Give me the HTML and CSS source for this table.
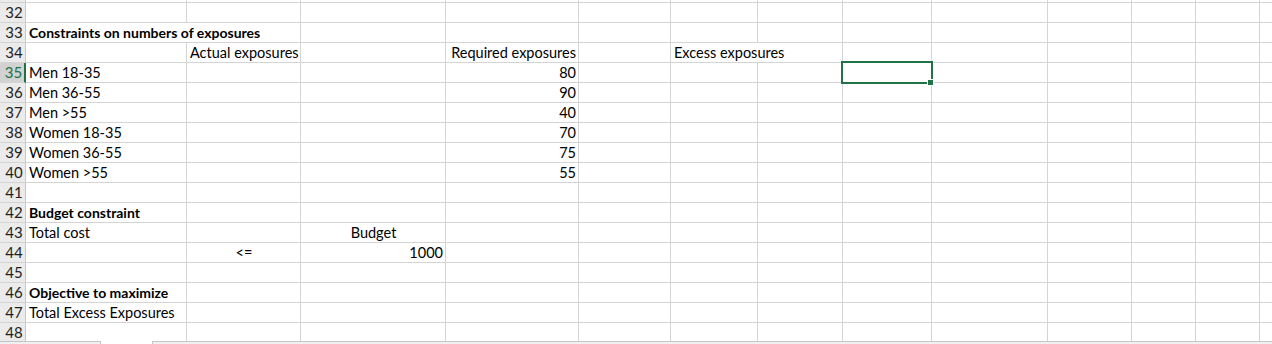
FILE: index.html
```html
<!DOCTYPE html>
<html>
<head>
<meta charset="utf-8">
<link rel="stylesheet" href="styles.css">
</head>
<body>
<div class="sheet">
  <div class="row top">
    <div class="hd"></div><div class="c"></div><div class="c"></div><div class="c"></div><div class="c"></div><div class="c"></div><div class="c"></div><div class="c"></div><div class="c"></div><div class="c"></div><div class="c"></div><div class="c"></div><div class="c"></div><div class="c"></div>
  </div>
  <div class="row">
    <div class="hd">32</div><div class="c"></div><div class="c"></div><div class="c"></div><div class="c"></div><div class="c"></div><div class="c"></div><div class="c"></div><div class="c"></div><div class="c"></div><div class="c"></div><div class="c"></div><div class="c"></div><div class="c"></div>
  </div>
  <div class="row">
    <div class="hd">33</div><div class="c span2 b">Constraints on numbers of exposures</div><div class="c"></div><div class="c"></div><div class="c"></div><div class="c"></div><div class="c"></div><div class="c"></div><div class="c"></div><div class="c"></div><div class="c"></div><div class="c"></div><div class="c"></div>
  </div>
  <div class="row">
    <div class="hd">34</div><div class="c"></div><div class="c r">Actual exposures</div><div class="c"></div><div class="c r">Required exposures</div><div class="c"></div><div class="c span2">Excess exposures</div><div class="c"></div><div class="c"></div><div class="c"></div><div class="c"></div><div class="c"></div><div class="c"></div>
  </div>
  <div class="row">
    <div class="hd sel">35</div><div class="c">Men 18-35</div><div class="c"></div><div class="c"></div><div class="c r">80</div><div class="c"></div><div class="c"></div><div class="c"></div><div class="c active"><span class="handle"></span></div><div class="c"></div><div class="c"></div><div class="c"></div><div class="c"></div><div class="c"></div>
  </div>
  <div class="row">
    <div class="hd">36</div><div class="c">Men 36-55</div><div class="c"></div><div class="c"></div><div class="c r">90</div><div class="c"></div><div class="c"></div><div class="c"></div><div class="c"></div><div class="c"></div><div class="c"></div><div class="c"></div><div class="c"></div><div class="c"></div>
  </div>
  <div class="row">
    <div class="hd">37</div><div class="c">Men &gt;55</div><div class="c"></div><div class="c"></div><div class="c r">40</div><div class="c"></div><div class="c"></div><div class="c"></div><div class="c"></div><div class="c"></div><div class="c"></div><div class="c"></div><div class="c"></div><div class="c"></div>
  </div>
  <div class="row">
    <div class="hd">38</div><div class="c">Women 18-35</div><div class="c"></div><div class="c"></div><div class="c r">70</div><div class="c"></div><div class="c"></div><div class="c"></div><div class="c"></div><div class="c"></div><div class="c"></div><div class="c"></div><div class="c"></div><div class="c"></div>
  </div>
  <div class="row">
    <div class="hd">39</div><div class="c">Women 36-55</div><div class="c"></div><div class="c"></div><div class="c r">75</div><div class="c"></div><div class="c"></div><div class="c"></div><div class="c"></div><div class="c"></div><div class="c"></div><div class="c"></div><div class="c"></div><div class="c"></div>
  </div>
  <div class="row">
    <div class="hd">40</div><div class="c">Women &gt;55</div><div class="c"></div><div class="c"></div><div class="c r">55</div><div class="c"></div><div class="c"></div><div class="c"></div><div class="c"></div><div class="c"></div><div class="c"></div><div class="c"></div><div class="c"></div><div class="c"></div>
  </div>
  <div class="row">
    <div class="hd">41</div><div class="c"></div><div class="c"></div><div class="c"></div><div class="c"></div><div class="c"></div><div class="c"></div><div class="c"></div><div class="c"></div><div class="c"></div><div class="c"></div><div class="c"></div><div class="c"></div><div class="c"></div>
  </div>
  <div class="row">
    <div class="hd">42</div><div class="c b">Budget constraint</div><div class="c"></div><div class="c"></div><div class="c"></div><div class="c"></div><div class="c"></div><div class="c"></div><div class="c"></div><div class="c"></div><div class="c"></div><div class="c"></div><div class="c"></div><div class="c"></div>
  </div>
  <div class="row">
    <div class="hd">43</div><div class="c">Total cost</div><div class="c"></div><div class="c m">Budget</div><div class="c"></div><div class="c"></div><div class="c"></div><div class="c"></div><div class="c"></div><div class="c"></div><div class="c"></div><div class="c"></div><div class="c"></div><div class="c"></div>
  </div>
  <div class="row">
    <div class="hd">44</div><div class="c"></div><div class="c m">&lt;=</div><div class="c r">1000</div><div class="c"></div><div class="c"></div><div class="c"></div><div class="c"></div><div class="c"></div><div class="c"></div><div class="c"></div><div class="c"></div><div class="c"></div><div class="c"></div>
  </div>
  <div class="row">
    <div class="hd">45</div><div class="c"></div><div class="c"></div><div class="c"></div><div class="c"></div><div class="c"></div><div class="c"></div><div class="c"></div><div class="c"></div><div class="c"></div><div class="c"></div><div class="c"></div><div class="c"></div><div class="c"></div>
  </div>
  <div class="row">
    <div class="hd">46</div><div class="c b">Objective to maximize</div><div class="c"></div><div class="c"></div><div class="c"></div><div class="c"></div><div class="c"></div><div class="c"></div><div class="c"></div><div class="c"></div><div class="c"></div><div class="c"></div><div class="c"></div><div class="c"></div>
  </div>
  <div class="row">
    <div class="hd">47</div><div class="c">Total Excess Exposures</div><div class="c"></div><div class="c"></div><div class="c"></div><div class="c"></div><div class="c"></div><div class="c"></div><div class="c"></div><div class="c"></div><div class="c"></div><div class="c"></div><div class="c"></div><div class="c"></div>
  </div>
  <div class="row">
    <div class="hd">48</div><div class="c"></div><div class="c"></div><div class="c"></div><div class="c"></div><div class="c"></div><div class="c"></div><div class="c"></div><div class="c"></div><div class="c"></div><div class="c"></div><div class="c"></div><div class="c"></div><div class="c"></div>
  </div>
</div>
<div class="tabs">
  <div class="tab-left"></div>
  <div class="tab-active"></div>
  <div class="tab-rest"></div>
</div>
</body>
</html>
```

FILE: styles.css
```css
html, body {
  margin: 0;
  padding: 0;
  background: #ffffff;
  width: 1272px;
  height: 344px;
  overflow: hidden;
}

body {
  font-family: "Lato", "Open Sans", sans-serif;
  font-size: 14.5px;
  color: #000000;
}

.sheet {
  height: 341px;
  overflow: hidden;
}

.row {
  display: grid;
  grid-template-columns: 26px 161px 114px 145px 133px 92px 87px 85px 89px 116px 84px 64px 64px 64px;
  height: 20px;
}

.row.top {
  height: 3px;
}

.hd,
.c {
  box-sizing: border-box;
  border-bottom: 1px solid #d4d4d4;
  border-right: 1px solid #d4d4d4;
  height: 100%;
  line-height: 19px;
  white-space: nowrap;
  overflow: visible;
}

.hd {
  background: #ebebeb;
  border-right-color: #c8c8c8;
  border-bottom-color: #d4d4d4;
  text-align: center;
  padding-left: 3px;
  font-size: 15px;
  color: #1e1e1e;
}

.hd.sel {
  background: #d2d2d2;
  color: #217346;
  border-right: 2px solid #217346;
}

.c {
  padding: 0 2px 0 3px;
}

.span2 {
  grid-column: span 2;
}

.b {
  font-weight: bold;
  font-size: 14px;
}

.r {
  text-align: right;
}

.m {
  text-align: center;
}

.active {
  position: relative;
}

.active::before {
  content: "";
  position: absolute;
  left: -2px;
  top: -2px;
  width: 92px;
  height: 23px;
  box-sizing: border-box;
  border: 2px solid #217346;
}

.handle {
  position: absolute;
  left: 84px;
  top: 16px;
  width: 5px;
  height: 5px;
  background: #217346;
  border: 1px solid #ffffff;
}

.tabs {
  display: flex;
  height: 3px;
}

.tab-left {
  box-sizing: border-box;
  width: 101px;
  border-top: 1px solid #c6c6c6;
  border-right: 1px solid #c6c6c6;
  background: #f0f0f0;
}

.tab-active {
  width: 51px;
  background: #ffffff;
}

.tab-rest {
  box-sizing: border-box;
  flex: 1;
  border-top: 1px solid #c6c6c6;
  border-left: 1px solid #c6c6c6;
  background: #f0f0f0;
}
```
